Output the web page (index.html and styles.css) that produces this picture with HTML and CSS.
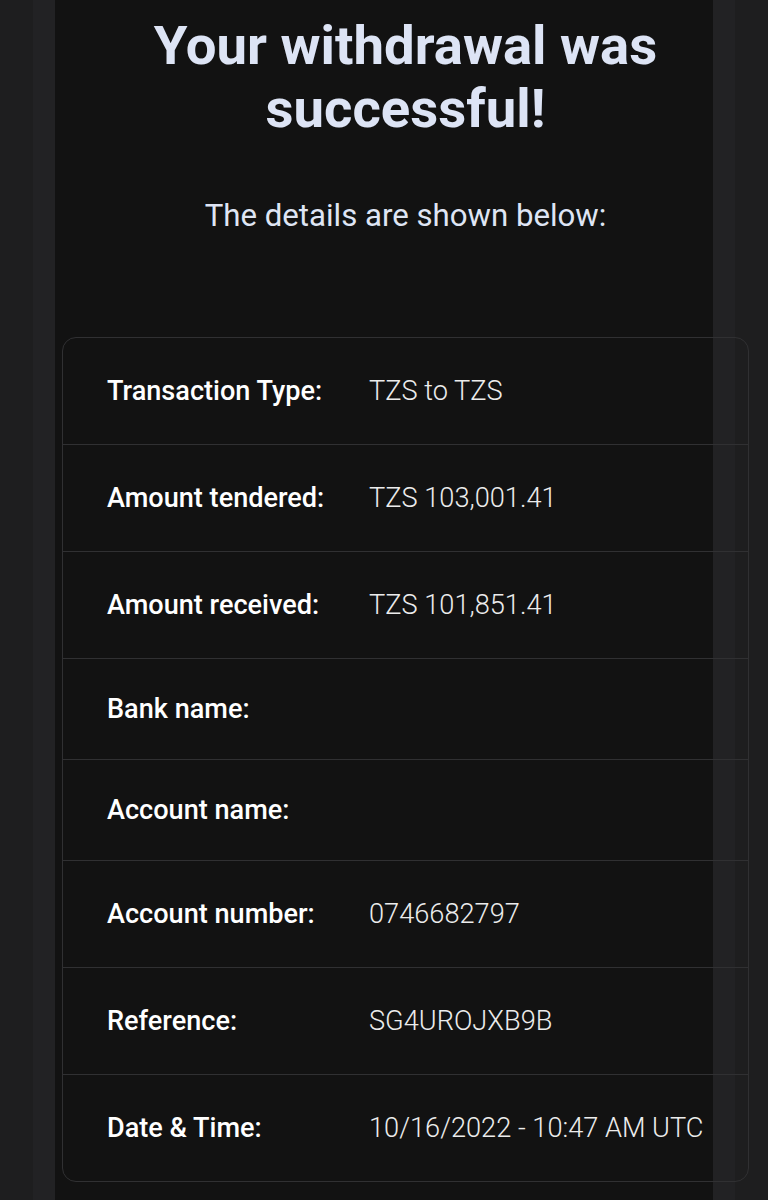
FILE: index.html
```html
<!DOCTYPE html>
<html lang="en">
<head>
<meta charset="utf-8">
<title>Withdrawal successful</title>
<link rel="stylesheet" href="styles.css">
</head>
<body>
<div class="frame">
  <div class="shell">
    <main class="main">
      <div class="content">
        <h1 class="title">Your withdrawal was successful!</h1>
        <p class="subtitle">The details are shown below:</p>
        <div class="card">
          <div class="row"><span class="label">Transaction Type:</span><span class="value">TZS to TZS</span></div>
          <div class="row"><span class="label">Amount tendered:</span><span class="value">TZS 103,001.41</span></div>
          <div class="row"><span class="label">Amount received:</span><span class="value">TZS 101,851.41</span></div>
          <div class="row"><span class="label">Bank name:</span><span class="value"></span></div>
          <div class="row"><span class="label">Account name:</span><span class="value"></span></div>
          <div class="row"><span class="label">Account number:</span><span class="value">0746682797</span></div>
          <div class="row"><span class="label">Reference:</span><span class="value">SG4UROJXB9B</span></div>
          <div class="row"><span class="label">Date &amp; Time:</span><span class="value">10/16/2022 - 10:47 AM UTC</span></div>
        </div>
      </div>
    </main>
  </div>
</div>
</body>
</html>
```

FILE: styles.css
```css
html, body {
  margin: 0;
  padding: 0;
  background: #1e1e1f;
}

body {
  font-family: Roboto, "Liberation Sans", sans-serif;
}

.frame {
  background: #1e1e1f;
  padding: 0 33px;
  min-height: 1200px;
  overflow: hidden;
}

.shell {
  background: #222224;
  padding: 0 22px;
  min-height: 1200px;
}

.main {
  background: #121212;
  min-height: 1200px;
  width: 658px;
}

.content {
  margin-left: 7px;
  width: 687px;
  padding-top: 14px;
}

.title {
  margin: 0;
  text-align: center;
  font-size: 54.5px;
  line-height: 63px;
  font-weight: 700;
  color: #dde4f5;
}

.subtitle {
  margin: 59px 0 0;
  text-align: center;
  font-size: 31.2px;
  line-height: 33px;
  font-weight: 400;
  color: #dfe5f4;
}

.card {
  margin-top: 105px;
  border: 1px solid #303032;
  border-radius: 14px;
}

.row {
  display: grid;
  grid-template-columns: 262px 1fr;
  align-items: center;
  padding: 33px 0 33px 44px;
  border-top: 1px solid #303032;
}

.row:first-child {
  border-top: none;
}

.label {
  font-size: 27.1px;
  line-height: 34px;
  font-weight: 500;
  color: #ffffff;
}

.value {
  font-size: 27.2px;
  line-height: 40px;
  font-weight: 300;
  color: #ececec;
}

.value:empty {
  display: none;
}
```
